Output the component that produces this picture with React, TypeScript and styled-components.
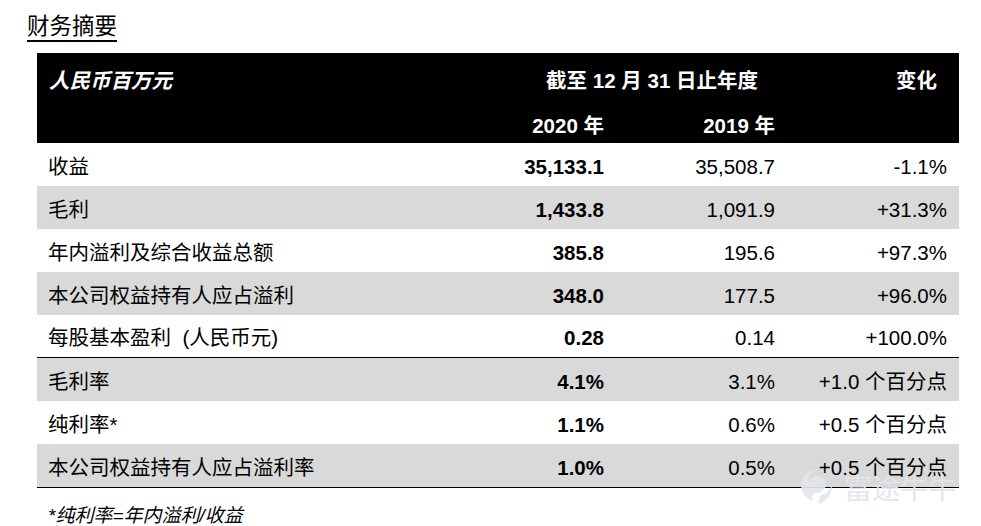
import styled, { createGlobalStyle } from 'styled-components'

const GlobalStyle = createGlobalStyle`
  body {
    margin: 0;
    background: #fff;
    font-family: 'Liberation Sans', 'Noto Sans CJK SC', sans-serif;
    color: #000;
  }
`

const cols = '403px 175px 172px 172px'

const Page = styled.div`
  position: relative;
  width: 981px;
  height: 526px;
  overflow: hidden;
  padding: 14px 0 0 27px;
  box-sizing: border-box;
`

const Title = styled.h1`
  display: inline-block;
  margin: 0;
  font-size: 22.5px;
  font-weight: normal;
  line-height: 26px;
  border-bottom: 2px solid #000;
`

const Table = styled.div`
  width: 922px;
  margin: 11px 0 0 10px;
`

const Head = styled.div`
  display: grid;
  grid-template-columns: ${cols};
  grid-template-rows: 52px 38px;
  background: #000;
  color: #fff;
  font-size: 20.5px;
  font-weight: bold;
`

const HeadCell = styled.div<{ $span?: boolean; $pad?: number; $italic?: boolean; $left?: boolean }>`
  display: flex;
  align-items: center;
  justify-content: ${(p) => (p.$left ? 'flex-start' : 'flex-end')};
  grid-column: ${(p) => (p.$span ? 'span 2' : 'auto')};
  padding: ${(p) => (p.$left ? '0 0 0 12px' : `0 ${p.$pad ?? 11}px 0 0`)};
  font-style: ${(p) => (p.$italic ? 'italic' : 'normal')};
`

const Group = styled.div`
  border-bottom: 1.5px solid #000;
`

const Row = styled.div<{ $shade?: boolean; $h?: number }>`
  display: grid;
  grid-template-columns: ${cols};
  box-sizing: border-box;
  height: ${(p) => p.$h ?? 43}px;
  padding-top: 5px;
  background: ${(p) => (p.$shade ? '#d9d9d9' : '#fff')};
  font-size: 20.5px;
  line-height: 1;
`

const Label = styled.div`
  display: flex;
  align-items: center;
  padding-left: 11px;
  white-space: pre;
`

const Num = styled.div<{ $bold?: boolean; $pad?: number }>`
  display: flex;
  align-items: center;
  justify-content: flex-end;
  padding-right: ${(p) => p.$pad ?? 12}px;
  font-weight: ${(p) => (p.$bold ? 'bold' : 'normal')};
  white-space: nowrap;
`

const Note = styled.div`
  margin: 12px 0 0 21px;
  font-size: 19px;
  font-style: italic;
`

const Watermark = styled.div`
  position: absolute;
  left: 800px;
  top: 467px;
  display: flex;
  align-items: center;
  gap: 10px;
  color: #e2e7eb;
  opacity: 0.92;
  font-size: 28px;
  font-family: 'Noto Sans CJK SC', sans-serif;
  pointer-events: none;
`

type Line = [string, string, string, string]

const top: Line[] = [
  ['收益', '35,133.1', '35,508.7', '-1.1%'],
  ['毛利', '1,433.8', '1,091.9', '+31.3%'],
  ['年内溢利及综合收益总额', '385.8', '195.6', '+97.3%'],
  ['本公司权益持有人应占溢利', '348.0', '177.5', '+96.0%'],
  ['每股基本盈利  (人民币元)', '0.28', '0.14', '+100.0%'],
]

const ratios: Line[] = [
  ['毛利率', '4.1%', '3.1%', '+1.0 个百分点'],
  ['纯利率*', '1.1%', '0.6%', '+0.5 个百分点'],
  ['本公司权益持有人应占溢利率', '1.0%', '0.5%', '+0.5 个百分点'],
]

const renderRow = (r: Line, i: number, shadeOdd: boolean, lastH?: number, total?: number) => (
  <Row key={r[0]} $shade={shadeOdd ? i % 2 === 1 : i % 2 === 0} $h={total && i === total - 1 ? lastH : 43}>
    <Label>{r[0]}</Label>
    <Num $bold $pad={11}>
      {r[1]}
    </Num>
    <Num>{r[2]}</Num>
    <Num>{r[3]}</Num>
  </Row>
)

export default function App() {
  return (
    <>
      <GlobalStyle />
      <Page>
        <Title>财务摘要</Title>
        <Table>
          <Head>
            <HeadCell $left $italic>
              人民币百万元
            </HeadCell>
            <HeadCell $span $pad={29}>
              截至 12 月 31 日止年度
            </HeadCell>
            <HeadCell $pad={22}>变化</HeadCell>
            <HeadCell />
            <HeadCell $pad={11}>2020 年</HeadCell>
            <HeadCell $pad={12}>2019 年</HeadCell>
            <HeadCell />
          </Head>
          <Group>{top.map((r, i) => renderRow(r, i, true, 42, top.length))}</Group>
          <Group>{ratios.map((r, i) => renderRow(r, i, false))}</Group>
        </Table>
        <Note>*纯利率=年内溢利/收益</Note>
        <Watermark>
          <svg width="34" height="38" viewBox="0 0 34 38">
            <path
              d="M17 2 C7 2 1 9 1 17 C1 25 7 31 13 33 C11 29 12 26 16 25 C22 24 26 21 26 16 C26 11 22 8 17 8 C13 8 10 11 10 14 C7 11 9 4 17 2 Z"
              fill="currentColor"
            />
            <circle cx="6" cy="23" r="3" fill="currentColor" />
            <path d="M20 28 C27 26 32 21 32 14 C33 24 28 33 18 36 Z" fill="currentColor" />
          </svg>
          <span>富途牛牛</span>
        </Watermark>
      </Page>
    </>
  )
}
